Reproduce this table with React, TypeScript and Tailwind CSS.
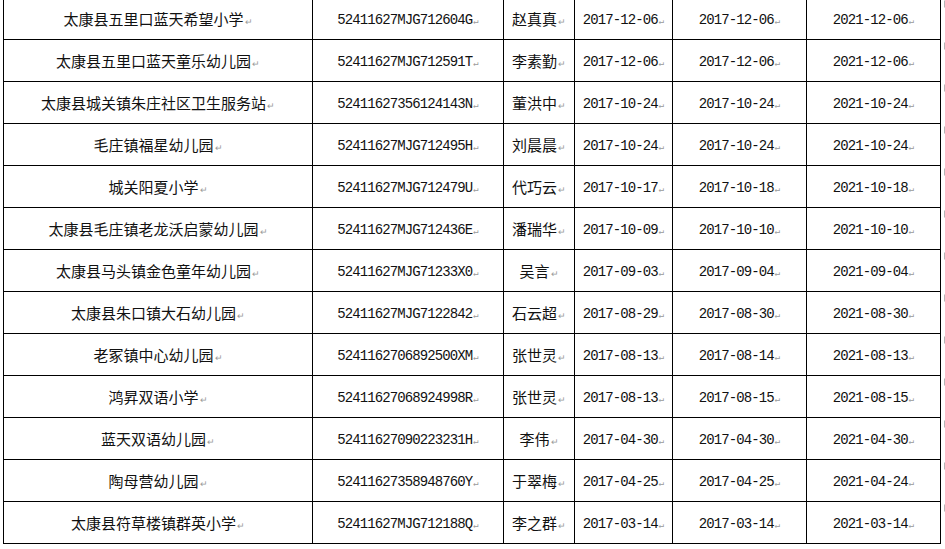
const rows = [
  ['太康县五里口蓝天希望小学', '52411627MJG712604G', '赵真真', '2017-12-06', '2017-12-06', '2021-12-06'],
  ['太康县五里口蓝天童乐幼儿园', '52411627MJG712591T', '李素勤', '2017-12-06', '2017-12-06', '2021-12-06'],
  ['太康县城关镇朱庄社区卫生服务站', '52411627356124143N', '董洪中', '2017-10-24', '2017-10-24', '2021-10-24'],
  ['毛庄镇福星幼儿园', '52411627MJG712495H', '刘晨晨', '2017-10-24', '2017-10-24', '2021-10-24'],
  ['城关阳夏小学', '52411627MJG712479U', '代巧云', '2017-10-17', '2017-10-18', '2021-10-18'],
  ['太康县毛庄镇老龙沃启蒙幼儿园', '52411627MJG712436E', '潘瑞华', '2017-10-09', '2017-10-10', '2021-10-10'],
  ['太康县马头镇金色童年幼儿园', '52411627MJG71233X0', '吴言', '2017-09-03', '2017-09-04', '2021-09-04'],
  ['太康县朱口镇大石幼儿园', '52411627MJG7122842', '石云超', '2017-08-29', '2017-08-30', '2021-08-30'],
  ['老冢镇中心幼儿园', '5241162706892500XM', '张世灵', '2017-08-13', '2017-08-14', '2021-08-13'],
  ['鸿昇双语小学', '52411627068924998R', '张世灵', '2017-08-13', '2017-08-15', '2021-08-15'],
  ['蓝天双语幼儿园', '52411627090223231H', '李伟', '2017-04-30', '2017-04-30', '2021-04-30'],
  ['陶母营幼儿园', '52411627358948760Y', '于翠梅', '2017-04-25', '2017-04-25', '2021-04-24'],
  ['太康县符草楼镇群英小学', '52411627MJG712188Q', '李之群', '2017-03-14', '2017-03-14', '2021-03-14'],
]

const widths = ['w-[309px]', 'w-[191px]', 'w-[71px]', 'w-[98px]', 'w-[134px]', 'w-[134px]']

export default function App() {
  return (
    <div className="w-[945px] h-[549px] overflow-hidden bg-white">
      <div className="ml-[3px] mt-[-3px] flex flex-col border-l border-t border-black w-[938px]">
        {rows.map((r, i) => (
          <div key={i} className="flex h-[42px] relative">
            {r.map((c, j) => {
              const cjk = j === 0 || j === 2
              return (
                <div
                  key={j}
                  className={`${widths[j]} shrink-0 h-full border-r border-b border-black flex items-center justify-center text-[#111] ${
                    cjk
                      ? "text-[15px] font-['Noto_Sans_CJK_SC',sans-serif]"
                      : "text-[14px] tracking-[-0.9px] pt-[2px] font-['Liberation_Mono',monospace]"
                  }`}
                >
                  <span className="leading-none whitespace-nowrap">
                    {c}
                    <span className="ml-[1px] text-[9px] tracking-normal text-[#9a9a9a]">↵</span>
                  </span>
                </div>
              )
            })}
            <svg className="absolute left-[939px] top-[2px]" width="5" height="8" viewBox="0 0 5 8">
              <path d="M1.5 0.5V7.5M1.5 1.5H4.5M1.5 4H3.5" stroke="#b5b5b5" strokeWidth="1" fill="none" />
            </svg>
          </div>
        ))}
      </div>
    </div>
  )
}
